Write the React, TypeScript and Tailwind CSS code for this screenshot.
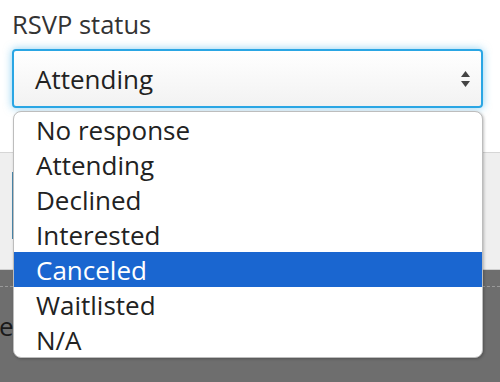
import React from "react";

const options = ["No response", "Attending", "Declined", "Interested", "Canceled", "Waitlisted", "N/A"];

export default function App() {
  return (
    <div className="relative w-[500px] h-[382px] overflow-hidden bg-white text-[#222] font-['Open_Sans','Liberation_Sans',sans-serif]">
      <div className="h-[153px] bg-white border-b border-[#d6d6d6] px-3 pt-[9px]">
        <div className="text-[25.5px] leading-[30px] text-[#333]">RSVP status</div>
        <div className="mt-[10px] h-[59px] w-[471px] rounded-[4px] border-2 border-[#2aa6e4] bg-gradient-to-b from-white to-[#f2f2f2] shadow-[0_0_8px_rgba(42,166,228,0.55)] flex items-center justify-between pl-[21px] pr-[10px]">
          <span className="text-[26px] leading-none">Attending</span>
          <svg width="11" height="18" viewBox="0 0 11 18" className="mt-[1px]">
            <path d="M5.5 1 L10 7 L1 7 Z" fill="#444" />
            <path d="M1 11 L10 11 L5.5 17 Z" fill="#444" />
          </svg>
        </div>
      </div>
      <div className="h-[117px] bg-[#efefef] pt-[19px] pl-3 border-b border-[#cfcfcf]">
        <div className="h-[67px] border-l-2 border-[#4a87aa]" />
      </div>
      <div className="h-[112px] bg-[#6e6e6e] pt-[16px]">
        <div className="border-t border-dashed border-[#9a9a9a]" />
        <div className="mt-[26px] -ml-[1px] text-[26px] leading-none text-[#1a1a1a]">e</div>
      </div>
      <div className="absolute left-[13px] top-[111px] w-[470px] rounded-[8px] border border-[#bdbdbd] bg-white shadow-[1px_1px_3px_rgba(0,0,0,0.25)] overflow-hidden">
        {options.map((o) => (
          <div
            key={o}
            className={
              "h-[35px] flex items-center pl-[22px] text-[26px] leading-none " +
              (o === "Canceled" ? "bg-[#1a66d0] text-white" : "text-[#222]")
            }
          >
            {o}
          </div>
        ))}
      </div>
    </div>
  );
}
